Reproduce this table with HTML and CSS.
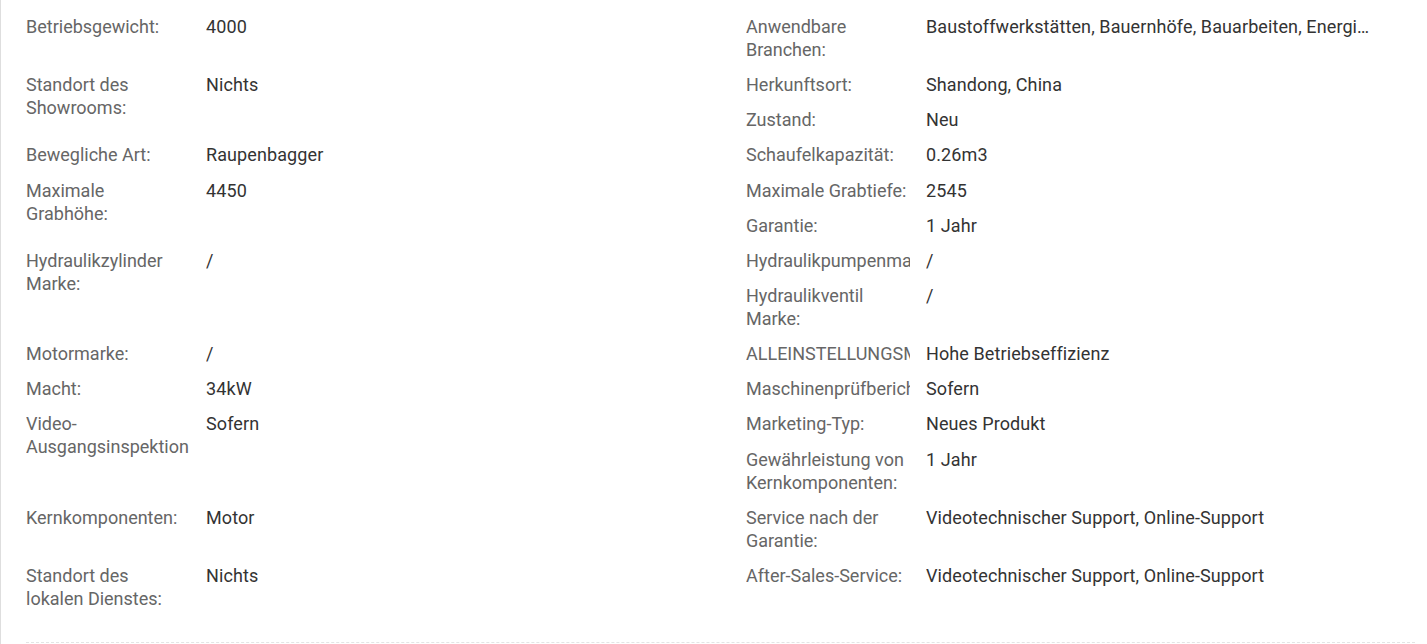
FILE: index.html
```html
<!DOCTYPE html>
<html lang="de">
<head>
<meta charset="utf-8">
<title>Attribute</title>
<link rel="stylesheet" href="styles.css">
</head>
<body>
<div class="panel">
  <div class="attrs">
    <div class="item l"><span class="k">Betriebsgewicht:</span><span class="v">4000</span></div>
    <div class="item r"><span class="k">Anwendbare Branchen:</span><span class="v">Baustoffwerkstätten, Bauernhöfe, Bauarbeiten, Energie &amp; Bergbau</span></div>

    <div class="item l span2"><span class="k">Standort des Showrooms:</span><span class="v">Nichts</span></div>
    <div class="item r"><span class="k">Herkunftsort:</span><span class="v">Shandong, China</span></div>
    <div class="item r"><span class="k">Zustand:</span><span class="v">Neu</span></div>

    <div class="item l"><span class="k">Bewegliche Art:</span><span class="v">Raupenbagger</span></div>
    <div class="item r"><span class="k">Schaufelkapazität:</span><span class="v">0.26m3</span></div>

    <div class="item l span2"><span class="k">Maximale Grabhöhe:</span><span class="v">4450</span></div>
    <div class="item r"><span class="k">Maximale Grabtiefe:</span><span class="v">2545</span></div>
    <div class="item r"><span class="k">Garantie:</span><span class="v">1 Jahr</span></div>

    <div class="item l span2"><span class="k">Hydraulikzylinder Marke:</span><span class="v">/</span></div>
    <div class="item r"><span class="k">Hydraulikpumpenmarke:</span><span class="v">/</span></div>
    <div class="item r"><span class="k">Hydraulikventil Marke:</span><span class="v">/</span></div>

    <div class="item l"><span class="k">Motormarke:</span><span class="v">/</span></div>
    <div class="item r"><span class="k">ALLEINSTELLUNGSMERKMAL:</span><span class="v">Hohe Betriebseffizienz</span></div>

    <div class="item l"><span class="k">Macht:</span><span class="v">34kW</span></div>
    <div class="item r"><span class="k">Maschinenprüfbericht:</span><span class="v">Sofern</span></div>

    <div class="item l span2"><span class="k">Video-Ausgangsinspektion</span><span class="v">Sofern</span></div>
    <div class="item r"><span class="k">Marketing-Typ:</span><span class="v">Neues Produkt</span></div>
    <div class="item r"><span class="k">Gewährleistung von Kernkomponenten:</span><span class="v">1 Jahr</span></div>

    <div class="item l"><span class="k">Kernkomponenten:</span><span class="v">Motor</span></div>
    <div class="item r"><span class="k">Service nach der Garantie:</span><span class="v">Videotechnischer Support, Online-Support</span></div>

    <div class="item l"><span class="k">Standort des lokalen Dienstes:</span><span class="v">Nichts</span></div>
    <div class="item r"><span class="k">After-Sales-Service:</span><span class="v">Videotechnischer Support, Online-Support</span></div>
  </div>
</div>
</body>
</html>
```

FILE: styles.css
```css
html, body {
  margin: 0;
  padding: 0;
  background: #fff;
}

body {
  font-family: Roboto, "Liberation Sans", Arial, sans-serif;
  font-size: 18px;
  line-height: 23px;
}

.panel {
  min-height: 644px;
  box-sizing: border-box;
  border-left: 1px solid #dedede;
  padding: 15px 0 0 25px;
}

.attrs {
  width: 1389px;
  display: grid;
  grid-template-columns: 720px 630px;
  row-gap: 12.15px;
  padding-bottom: 32px;
  border-bottom: 1px dashed #e4e4e4;
}

.item {
  display: flex;
  align-items: flex-start;
  min-width: 0;
}

.l { grid-column: 1; }
.r { grid-column: 2; }
.span2 { grid-row: span 2; }

.k {
  flex: 0 0 164px;
  width: 164px;
  margin-right: 16px;
  overflow: hidden;
  color: #666;
}

.v {
  flex: 1 1 auto;
  min-width: 0;
  white-space: nowrap;
  overflow: hidden;
  text-overflow: ellipsis;
  letter-spacing: 0.1px;
  color: #333;
}
```
